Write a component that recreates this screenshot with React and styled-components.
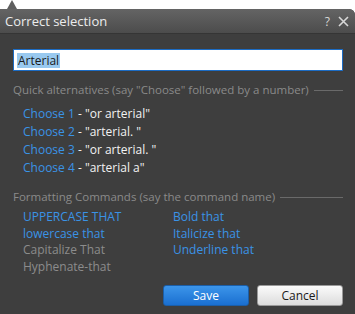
import React from "react";
import styled, { createGlobalStyle } from "styled-components";

const Global = createGlobalStyle`
    html, body {
        margin: 0;
        padding: 0;
        background: #ffffff;
        width: 355px;
        height: 314px;
        overflow: hidden;
    }
    * { box-sizing: border-box; }
`;

const alternatives = [
    { n: 1, text: '"or arterial"' },
    { n: 2, text: '"arterial. "' },
    { n: 3, text: '"or arterial. "' },
    { n: 4, text: '"arterial a"' },
];

const App = () => {
    return (
        <>
            <Global />
            <Frame>
                <Pointer />
                <Dialog>
                    <Header>
                        <Title>Correct selection</Title>
                        <HeaderIcons>
                            <span>?</span>
                            <svg width="11" height="11" viewBox="0 0 11 11">
                                <path d="M1 1 L10 10 M10 1 L1 10" stroke="#d8d8d8" strokeWidth="1.6" />
                            </svg>
                        </HeaderIcons>
                    </Header>
                    <Body>
                        <Input>
                            <Selected>Arterial</Selected>
                        </Input>

                        <Section>
                            <Legend>
                                <span>Quick alternatives (say "Choose" followed by a number)</span>
                                <Rule />
                            </Legend>
                            <AltList>
                                {alternatives.map((a) => (
                                    <Alt key={a.n}>
                                        <Cmd>Choose {a.n}</Cmd> - {a.text}
                                    </Alt>
                                ))}
                            </AltList>
                        </Section>

                        <Section $gap={12}>
                            <Legend>
                                <span>Formatting Commands (say the command name)</span>
                                <Rule />
                            </Legend>
                            <Commands>
                                <CmdCol>
                                    <Cmd>UPPERCASE THAT</Cmd>
                                    <Cmd>lowercase that</Cmd>
                                    <Cmd $off>Capitalize That</Cmd>
                                    <Cmd $off>Hyphenate-that</Cmd>
                                </CmdCol>
                                <CmdCol>
                                    <Cmd>Bold that</Cmd>
                                    <Cmd>Italicize that</Cmd>
                                    <Cmd>Underline that</Cmd>
                                </CmdCol>
                            </Commands>
                        </Section>

                        <Buttons>
                            <Button $primary>Save</Button>
                            <Button>Cancel</Button>
                        </Buttons>
                    </Body>
                </Dialog>
            </Frame>
        </>
    );
};

export default App;

//style------------------------------------------------------------------

const Frame = styled.div`
    width: 355px;
    height: 314px;
    padding-top: 9px;
    position: relative;
    font-family: "Open Sans", "Noto Sans", sans-serif;
`;

const Pointer = styled.div`
    position: absolute;
    left: 7px;
    top: 0;
    width: 0;
    height: 0;
    border-left: 5px solid transparent;
    border-right: 5px solid transparent;
    border-bottom: 9px solid #5f5f5f;
`;

const Dialog = styled.div`
    height: 305px;
    background: #3e3e3e;
    border-top-right-radius: 6px;
    display: flex;
    flex-direction: column;
    overflow: hidden;
`;

const Header = styled.div`
    height: 25px;
    background: linear-gradient(#646464, #4c4c4c);
    border-bottom: 1px solid #353535;
    display: flex;
    align-items: center;
    justify-content: space-between;
    padding: 0 6px 0 5px;
`;

const Title = styled.div`
    color: #ececec;
    font-size: 13px;
`;

const HeaderIcons = styled.div`
    display: flex;
    align-items: center;
    gap: 8px;
    color: #d8d8d8;
    font-size: 12px;
`;

const Body = styled.div`
    flex: 1;
    display: flex;
    flex-direction: column;
    padding: 15px 12px 0 13px;
`;

const Input = styled.div`
    height: 22px;
    background: #ffffff;
    border: 1px solid #1c6cc4;
    display: flex;
    align-items: center;
    padding-left: 3px;
`;

const Selected = styled.span`
    background: #99c9ef;
    color: #1a1a1a;
    font-size: 12px;
    line-height: 15px;
    padding: 0 1px;
`;

const Section = styled.div`
    margin-top: ${(p) => p.$gap || 11}px;
`;

const Legend = styled.div`
    display: flex;
    align-items: center;
    gap: 5px;
    color: #8a8a8a;
    font-size: 11.5px;
    line-height: 16px;
`;

const Rule = styled.div`
    flex: 1;
    height: 1px;
    background: #6a6a6a;
`;

const AltList = styled.div`
    display: flex;
    flex-direction: column;
    padding: 7px 0 0 10px;
`;

const Alt = styled.div`
    color: #f2f2f2;
    font-size: 12px;
    line-height: 18px;
`;

const Cmd = styled.span`
    color: ${(p) => (p.$off ? "#8c8c8c" : "#3a93e6")};
    font-size: 12px;
    line-height: 16.5px;
`;

const Commands = styled.div`
    display: grid;
    grid-template-columns: 150px 1fr;
    padding: 4px 0 0 10px;
`;

const CmdCol = styled.div`
    display: flex;
    flex-direction: column;
`;

const Buttons = styled.div`
    margin-top: auto;
    margin-bottom: 8px;
    display: flex;
    justify-content: flex-end;
    gap: 8px;
`;

const Button = styled.button`
    width: 86px;
    height: 21px;
    border-radius: 3px;
    font-family: "Open Sans", "Noto Sans", sans-serif;
    font-size: 12px;
    padding: 0;
    border: 1px solid ${(p) => (p.$primary ? "#1b5ea8" : "#9a9a9a")};
    color: ${(p) => (p.$primary ? "#ffffff" : "#1a1a1a")};
    background: ${(p) =>
        p.$primary
            ? "linear-gradient(#3c95ea, #1a6fd0)"
            : "linear-gradient(#fbfbfb, #dcdcdc)"};
`;
